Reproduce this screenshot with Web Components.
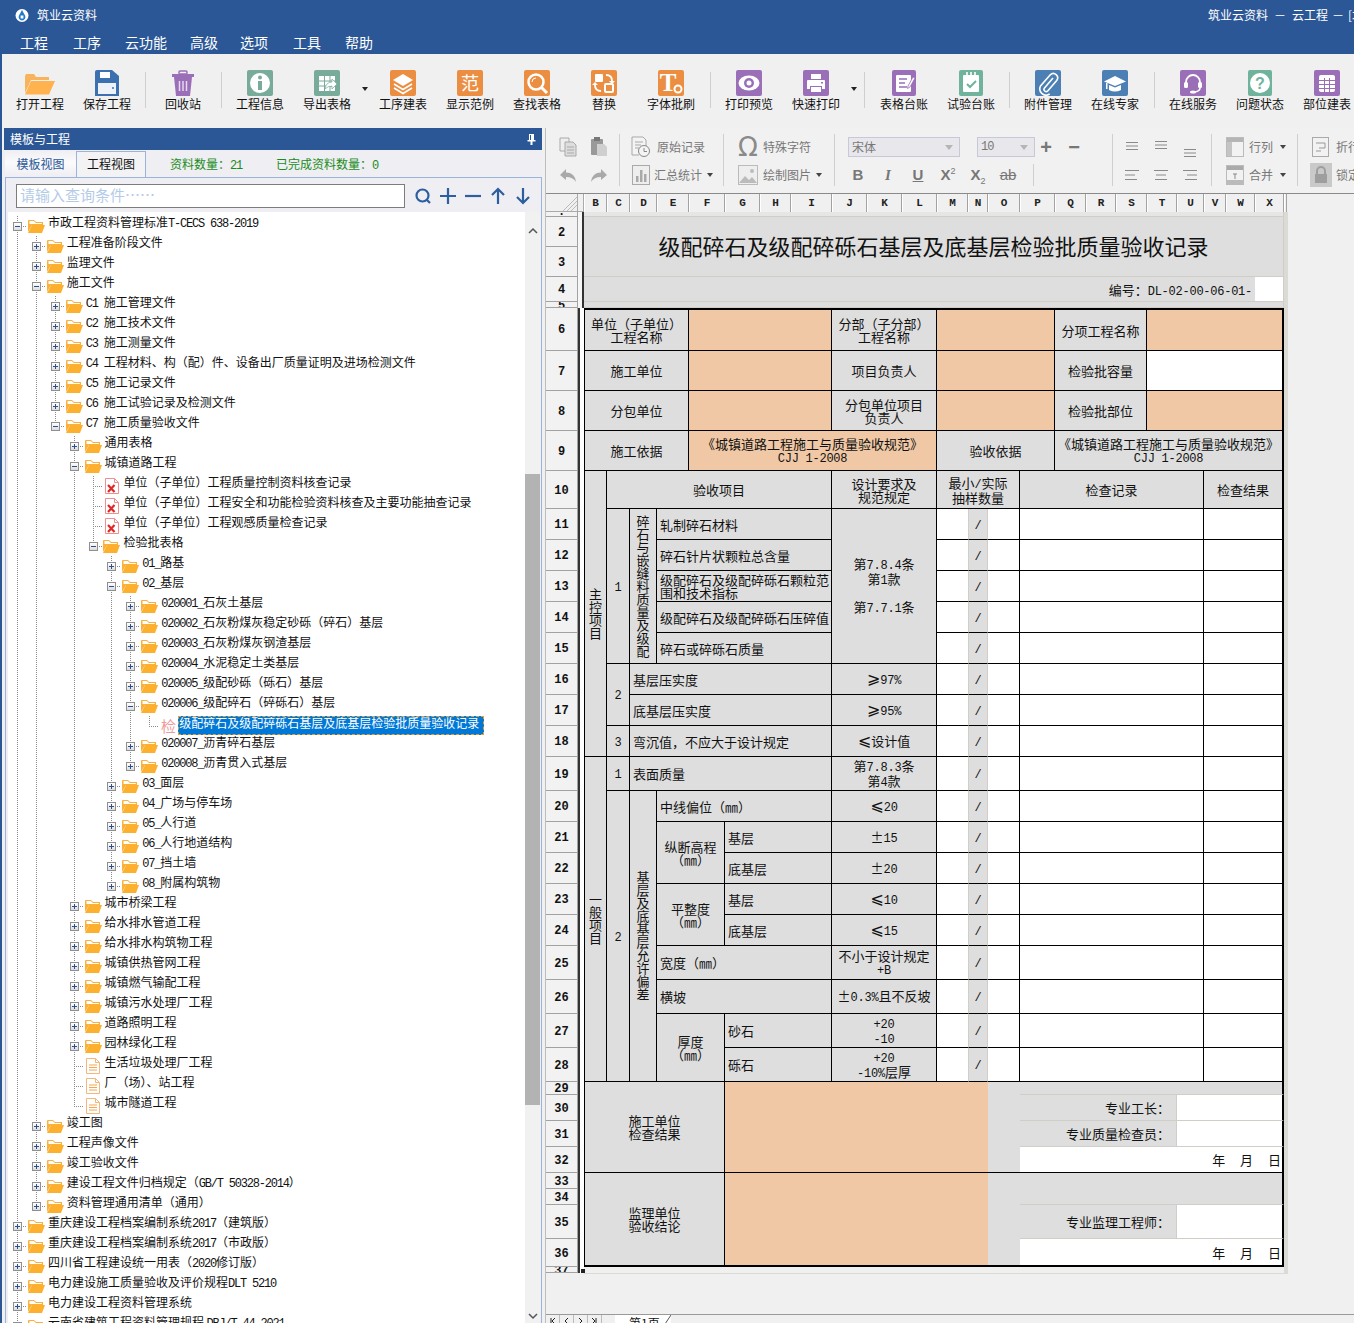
<!DOCTYPE html>
<html lang="zh-CN">
<head>
<meta charset="utf-8">
<title>筑业云资料</title>
<style>
  html, body { margin: 0; height: 1323px; overflow: hidden; }
  body {
    display: flex; flex-direction: column;
    font: 12px/1.2 "Noto Sans CJK SC", "Liberation Sans", sans-serif;
    background: #f0f0f0; color: #111;
  }
  .main { flex: 1; display: flex; min-height: 0; border-left: 2px solid #2b5797; }
</style>
</head>
<body>
<zy-titlebar></zy-titlebar>
<zy-ribbon>
  <zy-tool icon="open" label="打开工程"></zy-tool>
  <zy-tool icon="save" label="保存工程"></zy-tool>
  <zy-sep></zy-sep>
  <zy-tool icon="trash" label="回收站"></zy-tool>
  <zy-sep style="width:10px"></zy-sep>
  <zy-tool icon="info" label="工程信息"></zy-tool>
  <zy-tool icon="export" label="导出表格"></zy-tool>
  <zy-drop></zy-drop>
  <zy-tool icon="layers" label="工序建表"></zy-tool>
  <zy-tool icon="fan" label="显示范例"></zy-tool>
  <zy-tool icon="find" label="查找表格"></zy-tool>
  <zy-tool icon="swap" label="替换"></zy-tool>
  <zy-tool icon="brush" label="字体批刷"></zy-tool>
  <zy-sep style="width:11px"></zy-sep>
  <zy-tool icon="eye" label="打印预览"></zy-tool>
  <zy-tool icon="printer" label="快速打印"></zy-tool>
  <zy-drop></zy-drop>
  <zy-sep style="width:12px"></zy-sep>
  <zy-tool icon="ledger" label="表格台账"></zy-tool>
  <zy-tool icon="test" label="试验台账"></zy-tool>
  <zy-sep style="width:10px"></zy-sep>
  <zy-tool icon="clip" label="附件管理"></zy-tool>
  <zy-tool icon="cap" label="在线专家"></zy-tool>
  <zy-sep style="width:11px"></zy-sep>
  <zy-tool icon="headset" label="在线服务"></zy-tool>
  <zy-tool icon="help" label="问题状态"></zy-tool>
  <zy-tool icon="grid" label="部位建表"></zy-tool>
</zy-ribbon>
<div class="main">
  <tree-panel></tree-panel>
  <sheet-view></sheet-view>
</div>

<script>
// ascii runs get the narrow mono look of the original bitmap font
const fmt = s => s
  .replace(/[\x21-\x7e][\x20-\x7e]*/g, m => `<span class="a">${m}</span>`)
  .replace(/[⩾⩽]/g, m => `<span class="cmp">${m}</span>`)
  .replace(/\n/g, '<br>');

class ZyTitlebar extends HTMLElement {
  constructor() {
    super();
    this.attachShadow({ mode: 'open' });
    const menu = [['工程', 20], ['工序', 25], ['云功能', 24], ['高级', 23], ['选项', 22], ['工具', 25], ['帮助', 24]];
    this.shadowRoot.innerHTML = `
      <style>
        :host { display: block; height: 54px; background: #2b5797; color: #fff; }
        .top { height: 30px; display: flex; align-items: center; padding-left: 15px; }
        .top svg { margin-right: 8px; }
        .name { flex: 1; }
        .right { width: 146px; overflow: hidden; white-space: pre; }
        .menu { height: 24px; display: flex; align-items: center; font-size: 14px; }
      </style>
      <div class="top">
        <svg width="14" height="16" viewBox="0 0 14 16">
          <circle cx="7" cy="8.5" r="6.5" fill="#fff"/>
          <path d="M7 3 10 8.5A3.4 3.4 0 1 1 4 8.5Z" fill="#2478c8"/>
          <rect x="5.6" y="8.5" width="2.8" height="3" fill="#fff"/>
        </svg>
        <span class="name">筑业云资料</span>
        <span class="right">筑业云资料<span style="margin:0 6px">－</span>云工程<span style="margin:0 4px">－</span>[北京</span>
      </div>
      <div class="menu">${menu.map(([t, m]) => `<span style="margin-left:${m}px">${t}</span>`).join('')}</div>`;
  }
}
customElements.define('zy-titlebar', ZyTitlebar);

class ZyRibbon extends HTMLElement {
  constructor() {
    super();
    this.attachShadow({ mode: 'open' });
    this.shadowRoot.innerHTML = `
      <style>
        :host { display: flex; height: 74px; box-sizing: border-box; padding: 0 0 0 4.5px; background: #f0f0f0;
                border-left: 2px solid #2b5797; overflow: hidden; }
      </style>
      <slot></slot>`;
  }
}
customElements.define('zy-ribbon', ZyRibbon);

const tile = (c, inner, w = 26) => `<svg width="26" height="26" viewBox="0 0 26 26"><rect x="${(26 - w) / 2}" width="${w}" height="26" rx="2" fill="${c}"/>${inner}</svg>`;
const ORANGE = '#ec8e42', PURPLE = '#9b6fb8', GREEN = '#78ab9a', BLUE = '#4c80b5', TEAL = '#70b39d';

const ICONS = {
  open: `<svg width="32" height="22" viewBox="0 0 32 22" style="margin-top:3px;margin-bottom:1px">
    <path d="M1 20V3l1-2h8l2 3h13v3H7Z" fill="#f8b45c"/>
    <path d="M7 8h24l-6 13.500H1Z" fill="#ffb24d"/></svg>`,
  save: `<svg width="24" height="26" viewBox="0 0 24 26">
    <path d="M0 2a2 2 0 0 1 2-2h15l7 6v20H0Z" fill="#3c70ae"/>
    <rect x="5" y="2" width="10" height="6" fill="#fff"/>
    <rect x="3" y="13" width="18" height="11" fill="#eef2f8"/>
    <circle cx="18" cy="18" r="1" fill="#3c70ae"/></svg>`,
  trash: `<svg width="26" height="26" viewBox="0 0 26 26">
    <rect x="9" y="1" width="8" height="3" rx="1" fill="none" stroke="${PURPLE}" stroke-width="1.500"/>
    <rect x="2" y="4" width="22" height="3" fill="${PURPLE}"/>
    <path d="M4 7h18l-2 19H6Z" fill="${PURPLE}"/>
    <path d="M9.500 11v10M13 11v10M16.500 11v10" stroke="#e6d8ee" stroke-width="1.500"/></svg>`,
  info: tile(GREEN, `<circle cx="13" cy="13" r="10" fill="#fff"/><circle cx="13" cy="7.500" r="2" fill="${GREEN}"/><rect x="11" y="11" width="4" height="9" fill="${GREEN}"/>`),
  export: tile(GREEN, `<rect x="5" y="6" width="16" height="15" fill="#fff"/><path d="M5 11h16M5 16h16M10.500 6v15M16 6v15" stroke="${GREEN}"/><path d="M11 19q1-7 7-7V9l5 5-5 5v-3q-4 0-7 3Z" fill="#fff" stroke="${GREEN}" stroke-width=".7"/>`),
  layers: tile(ORANGE, `<path d="M13 4 23 10 13 16 3 10Z" fill="#fff"/><path d="M4 14l9 5.500 9-5.500M4 18l9 5.500 9-5.500" fill="none" stroke="#fff" stroke-width="1.600"/>`),
  fan: tile(ORANGE, `<text x="13" y="19.500" text-anchor="middle" font-size="18" fill="#fff" font-family="Noto Sans CJK SC">范</text>`),
  find: tile(ORANGE, `<circle cx="12" cy="12" r="7.500" fill="none" stroke="#fff" stroke-width="2.500"/><path d="M17.500 17.500 23 23" stroke="#fff" stroke-width="3"/><path d="M8 12a4 4 0 0 1 4-4" fill="none" stroke="#fff"/>`),
  swap: tile(ORANGE, `<rect x="4" y="4" width="8" height="8" rx="1" fill="#fff"/><rect x="14" y="14" width="8" height="8" rx="1" fill="none" stroke="#fff" stroke-width="2"/><path d="M15 5q6 0 6 6M4 15q0 6 6 6" fill="none" stroke="#fff" stroke-width="1.800"/><path d="M18 11h6l-3 3ZM1 15h6l-3-3Z" fill="#fff"/>`),
  brush: tile(ORANGE, `<text x="10" y="21" text-anchor="middle" font-size="25" font-weight="700" fill="#fff" font-family="Liberation Serif">T</text><circle cx="20" cy="19" r="3.500" fill="none" stroke="#fff" stroke-width="2"/>`),
  eye: tile(PURPLE, `<ellipse cx="13" cy="13" rx="10.500" ry="7.500" fill="#fff"/><circle cx="13" cy="13" r="5" fill="${PURPLE}"/><circle cx="13" cy="13" r="2.500" fill="#fff"/>`),
  printer: tile(PURPLE, `<rect x="8" y="4" width="10" height="5" fill="#fff"/><path d="M4 11a1 1 0 0 1 1-1h16a1 1 0 0 1 1 1v8h-3v-3H7v3H4Z" fill="#fff"/><rect x="8" y="17" width="10" height="5" fill="#fff"/><rect x="18" y="12" width="2" height="1.500" fill="${PURPLE}"/>`),
  ledger: tile(PURPLE, `<rect x="5" y="5" width="15" height="17" rx="1" fill="#fff"/><path d="M8 9h8M8 13h6M8 17h8" stroke="${PURPLE}" stroke-width="1.500"/><path d="M17 16l5-9 2 1-5 9-2.500 1.500Z" fill="#fff" stroke="${PURPLE}" stroke-width=".8"/>`, 24),
  test: tile(TEAL, `<rect x="5" y="5" width="16" height="17" rx="1" fill="#fff"/><path d="M9 2v6M13 2v6M17 2v6" stroke="#fff" stroke-width="1.600"/><path d="M9 14l3 3 6-6" fill="none" stroke="${TEAL}" stroke-width="2"/>`, 24),
  clip: tile(BLUE, `<path d="M18 8 9.500 18a2.200 2.200 0 0 0 3.200 3l9-10.500a4.300 4.300 0 0 0-6.400-5.700L5.500 16a6.300 6.300 0 0 0 9.200 8" fill="none" stroke="#fff" stroke-width="1.600"/>`),
  cap: tile(BLUE, `<path d="M13 6 24 11.500 13 16 2 11.500Z" fill="#fff"/><path d="M7 15v5q6 3 12 0v-5l-6 2.500Z" fill="#fff"/><rect x="4" y="13" width="1.500" height="6" fill="#fff"/>`),
  headset: tile(PURPLE, `<path d="M6 15v-3a7 7 0 0 1 14 0v3" fill="none" stroke="#fff" stroke-width="1.800"/><rect x="4" y="12" width="4" height="6" rx="1.500" fill="#fff"/><rect x="18" y="12" width="4" height="6" rx="1.500" fill="#fff"/><path d="M20 18q0 3-5 4" fill="none" stroke="#fff" stroke-width="1.500"/><ellipse cx="13" cy="22" rx="3" ry="1.500" fill="#fff"/>`),
  help: tile(TEAL, `<circle cx="13" cy="13" r="10" fill="#fff"/><text x="13" y="18.500" text-anchor="middle" font-size="16" font-weight="700" fill="${TEAL}" font-family="Liberation Sans">?</text>`, 24),
  grid: tile(PURPLE, `<rect x="5" y="5" width="16" height="17" rx="2" fill="#fff"/><path d="M5 10.500h16M5 14.500h16M5 18.500h16M10.500 8v14M15.500 8v14" stroke="${PURPLE}"/>`),
};

class ZyTool extends HTMLElement {
  constructor() {
    super();
    this.attachShadow({ mode: 'open' });
    this.shadowRoot.innerHTML = `
      <style>
        :host { display: flex; flex-direction: column; align-items: center; width: 67px; flex: none; padding-top: 16px; color: #111; }
        .i { height: 26px; }
        .t { line-height: 16px; white-space: nowrap; }
      </style>
      <div class="i">${ICONS[this.getAttribute('icon')] || ''}</div>
      <div class="t">${this.getAttribute('label')}</div>`;
  }
}
customElements.define('zy-tool', ZyTool);

class ZySep extends HTMLElement {
  constructor() {
    super();
    this.attachShadow({ mode: 'open' });
    this.shadowRoot.innerHTML = `
      <style>
        :host { display: flex; justify-content: center; width: 9px; flex: none; padding-top: 18px; box-sizing: border-box; height: 54px; }
        i { display: block; width: 1px; height: 36px; background: #cfcfcf; }
      </style><i></i>`;
  }
}
customElements.define('zy-sep', ZySep);

class ZyDrop extends HTMLElement {
  constructor() {
    super();
    this.attachShadow({ mode: 'open' });
    this.shadowRoot.innerHTML = `
      <style>
        :host { display: block; width: 9px; flex: none; padding-top: 33px; }
        i { display: block; margin-left: 1px; width: 0; height: 0; border: 3px solid transparent; border-top: 4px solid #222; border-bottom: 0; }
      </style><i></i>`;
  }
}
customElements.define('zy-drop', ZyDrop);

// level, text, kind (f folder, d doc, p pdf, k check form), open flag
const TREE = [
  [0, '市政工程资料管理标准T-CECS 638-2019', 'f', 1],
  [1, '工程准备阶段文件', 'f'], [1, '监理文件', 'f'], [1, '施工文件', 'f', 1],
  [2, 'C1 施工管理文件', 'f'], [2, 'C2 施工技术文件', 'f'], [2, 'C3 施工测量文件', 'f'],
  [2, 'C4 工程材料、构（配）件、设备出厂质量证明及进场检测文件', 'f'],
  [2, 'C5 施工记录文件', 'f'], [2, 'C6 施工试验记录及检测文件', 'f'], [2, 'C7 施工质量验收文件', 'f', 1],
  [3, '通用表格', 'f'], [3, '城镇道路工程', 'f', 1],
  [4, '单位（子单位）工程质量控制资料核查记录', 'p'],
  [4, '单位（子单位）工程安全和功能检验资料核查及主要功能抽查记录', 'p'],
  [4, '单位（子单位）工程观感质量检查记录', 'p'],
  [4, '检验批表格', 'f', 1],
  [5, '01_路基', 'f'], [5, '02_基层', 'f', 1],
  [6, '020001_石灰土基层', 'f'], [6, '020002_石灰粉煤灰稳定砂砾（碎石）基层', 'f'],
  [6, '020003_石灰粉煤灰钢渣基层', 'f'], [6, '020004_水泥稳定土类基层', 'f'],
  [6, '020005_级配砂砾（砾石）基层', 'f'], [6, '020006_级配碎石（碎砾石）基层', 'f', 1],
  [7, '级配碎石及级配碎砾石基层及底基层检验批质量验收记录', 'k'],
  [6, '020007_沥青碎石基层', 'f'], [6, '020008_沥青贯入式基层', 'f'],
  [5, '03_面层', 'f'], [5, '04_广场与停车场', 'f'], [5, '05_人行道', 'f'],
  [5, '06_人行地道结构', 'f'], [5, '07_挡土墙', 'f'], [5, '08_附属构筑物', 'f'],
  [3, '城市桥梁工程', 'f'], [3, '给水排水管道工程', 'f'], [3, '给水排水构筑物工程', 'f'],
  [3, '城镇供热管网工程', 'f'], [3, '城镇燃气输配工程', 'f'], [3, '城镇污水处理厂工程', 'f'],
  [3, '道路照明工程', 'f'], [3, '园林绿化工程', 'f'],
  [3, '生活垃圾处理厂工程', 'd'], [3, '厂（场）、站工程', 'd'], [3, '城市隧道工程', 'd'],
  [1, '竣工图', 'f'], [1, '工程声像文件', 'f'], [1, '竣工验收文件', 'f'],
  [1, '建设工程文件归档规定（GB/T 50328-2014）', 'f'], [1, '资料管理通用清单（通用）', 'f'],
  [0, '重庆建设工程档案编制系统2017（建筑版）', 'f'], [0, '重庆建设工程档案编制系统2017（市政版）', 'f'],
  [0, '四川省工程建设统一用表（2020修订版）', 'f'], [0, '电力建设施工质量验收及评价规程DLT 5210', 'f'],
  [0, '电力建设工程资料管理系统', 'f'], [0, '云南省建筑工程资料管理规程 DBJ/T-44-2021', 'f'],
];

const FOLDER = `<svg width="17" height="14" viewBox="0 0 17 14">
  <path d="M0 13V1.500L1 1h5l2 2h7v3H4Z" fill="#fbb03b"/>
  <path d="M1.500 5V2h4.300l2 2h6v1Z" fill="#fff"/>
  <path d="M4 6h13l-3 8H0Z" fill="#fdaf2e"/></svg>`;
const PDF = `<svg width="14" height="16" viewBox="0 0 14 16">
  <path d="M.5.500h9l4 4v11H.5Z" fill="#fff" stroke="#ef8f8f"/>
  <path d="M9.500.500v4h4" fill="none" stroke="#ef8f8f"/>
  <path d="M3 7 9.500 14M9.500 7 3 14" stroke="#e02828" stroke-width="2.200"/></svg>`;
const DOC = `<svg width="14" height="16" viewBox="0 0 14 16">
  <path d="M.5.500h9l4 4v11H.5Z" fill="#fff" stroke="#f4b67a"/>
  <path d="M9.500.500v4h4" fill="none" stroke="#f4b67a"/>
  <path d="M3 7h8M3 9.500h8M3 12h8" stroke="#f5a450"/></svg>`;

class TreePanel extends HTMLElement {
  constructor() {
    super();
    this.attachShadow({ mode: 'open' });
    this.shadowRoot.innerHTML = `
      <style>
        :host { display: flex; flex-direction: column; width: 538px; flex: none; margin-left: 2px; background: #eeeef3; overflow: hidden; }
        .a { font: 12px/1 "Liberation Mono", monospace; letter-spacing: -1.2px; }
        .head { height: 22px; flex: none; background: #2b5797; color: #fff; display: flex; align-items: center; justify-content: space-between; padding: 0 6px 0 6px; }
        .tabs { height: 26px; flex: none; margin: 1px 0 0 1px; display: flex; align-items: center; }
        .tab { box-sizing: border-box; height: 26px; width: 71px; display: flex; align-items: center; justify-content: center; }
        .tab.on { color: #2b5797; background: linear-gradient(#f0f0f4, #fbfbfd 45%, #eeeef3); }
        .tab.off { border: 1px solid #9ab4dc; border-bottom: 0; width: 70px; background: #f3f3f6; }
        .count { color: #1a8c1a; margin-left: 24px; }
        .count .a { color: #1a8c1a; }
        .body { flex: 1; min-height: 0; margin-left: 1px; border: 1px solid #9ab4dc; border-bottom: 0; display: flex; flex-direction: column; padding-left: 2px; }
        .search { height: 24px; flex: none; margin: 6px 0 4px 8px; display: flex; align-items: center; }
        .input { box-sizing: border-box; width: 389px; height: 24px; margin-right: 5px; background: #fff; border: 1px solid #7c7c7c;
                 color: #b4cbe8; font-size: 15px; line-height: 20px; padding-left: 3px; white-space: nowrap; }
        .sbtn { width: 25px; display: flex; justify-content: center; }
        .wrap { flex: 1; min-height: 0; display: flex; }
        .tree { flex: 1; min-width: 0; background: #fff; padding-top: 4px; overflow: hidden; }
        .row { display: flex; height: 20px; align-items: center; white-space: pre; color: #111; }
        .g { width: 18.9px; height: 20px; flex: none; background: no-repeat; }
        .ic { width: 17px; height: 20px; flex: none; margin: 0 3px 0 1px; display: flex; align-items: center; justify-content: center; }
        .ex { width: 9px; height: 9px; margin: 5.500px 0 0 5px; box-sizing: border-box; border: 1px solid #8f8f8f; background: linear-gradient(#fff, #dcdcdc); display: flex; align-items: center; justify-content: center; }
        .ex svg { display: block; }
        .tx { align-self: flex-start; line-height: 12px; height: 20px; }
        .sel .tx { height: 19px; line-height: 13px; margin-left: -2px; padding: 0 2px 0 1px; background: #0078d7; color: #fff; outline: 1px dashed #e8a030; outline-offset: -1px; width: 306px; box-sizing: border-box; }
        .k { color: #f29a9a; font-size: 15px; }
        .scroll { width: 15px; margin-right: 1px; flex: none; background: #f1f1f1; display: flex; flex-direction: column; }
        .scroll .sp1 { height: 262px; flex: none; padding-top: 10px; box-sizing: border-box; text-align: center; }
        .thumb { height: 631px; flex: none; background: #b3b3b3; }
        .scroll .sp2 { flex: 1; display: flex; flex-direction: column; justify-content: flex-end; align-items: center; padding-bottom: 3px; }
      </style>
      <div class="head"><span>模板与工程</span>
        <svg width="9" height="11" viewBox="0 0 9 11"><path d="M2 0h5v6h1.500v1.500h-3V11h-2V7.500h-3V6H2Z" fill="#fff"/><rect x="3" y="1" width="1" height="5" fill="#2b5797"/></svg>
      </div>
      <div class="tabs">
        <div class="tab on">模板视图</div><div class="tab off">工程视图</div>
        <span class="count">资料数量：${fmt('21')}</span><span class="count" style="margin-left:34px">已完成资料数量：${fmt('0')}</span>
      </div>
      <div class="body">
        <div class="search">
          <div class="input">请输入查询条件……</div>
          <span class="sbtn"><svg width="18" height="18" viewBox="0 0 18 18"><circle cx="8.500" cy="8.500" r="6" fill="none" stroke="#2d5f9f" stroke-width="2.200"/><path d="M12.500 12.500 16 16" stroke="#2d5f9f" stroke-width="2.200"/></svg></span>
          <span class="sbtn"><svg width="18" height="18" viewBox="0 0 18 18"><path d="M1 9h16M9 1v16" stroke="#2d5f9f" stroke-width="2.200"/></svg></span>
          <span class="sbtn"><svg width="18" height="18" viewBox="0 0 18 18"><path d="M1 9h16" stroke="#2d5f9f" stroke-width="2.200"/></svg></span>
          <span class="sbtn"><svg width="18" height="18" viewBox="0 0 18 18"><path d="M9 17V2M3 8l6-6 6 6" fill="none" stroke="#2d5f9f" stroke-width="2.200"/></svg></span>
          <span class="sbtn"><svg width="18" height="18" viewBox="0 0 18 18"><path d="M9 1v15M3 10l6 6 6-6" fill="none" stroke="#2d5f9f" stroke-width="2.200"/></svg></span>
        </div>
        <div class="wrap">
          <div class="tree">${this.rows()}</div>
          <div class="scroll">
            <div class="sp1"><svg width="10" height="7" viewBox="0 0 10 7"><path d="M1 6l4-4 4 4" fill="none" stroke="#555" stroke-width="1.500"/></svg></div>
            <div class="thumb"></div>
            <div class="sp2"><svg width="10" height="7" viewBox="0 0 10 7"><path d="M1 1l4 4 4-4" fill="none" stroke="#555" stroke-width="1.500"/></svg></div>
          </div>
        </div>
      </div>`;
  }

  rows() {
    // dotted guides are backgrounds of the indent cells
    const dot = 'repeating-linear-gradient(#8a8a8a 0 1px,transparent 1px 2px)';
    const dotH = 'repeating-linear-gradient(90deg,#8a8a8a 0 1px,transparent 1px 2px)';
    const hasNext = (i, lvl) => {
      for (let j = i + 1; j < TREE.length; j++) {
        if (TREE[j][0] === lvl) return true;
        if (TREE[j][0] < lvl) return false;
      }
      return false;
    };
    return TREE.map(([lvl, text, kind, open], i) => {
      let g = '';
      for (let k = 0; k < lvl; k++) {
        const on = hasNext(i, k);
        g += `<span class="g" ${on ? `style="background-image:${dot};background-size:1px 100%;background-position:9px 0"` : ''}></span>`;
      }
      const down = hasNext(i, lvl);
      const leaf = kind !== 'f';
      const sign = open
        ? '<svg width="7" height="7" viewBox="0 0 7 7"><path d="M1 3.500h5" stroke="#2b4f8f"/></svg>'
        : '<svg width="7" height="7" viewBox="0 0 7 7"><path d="M1 3.500h5M3.500 1v5" stroke="#2b4f8f"/></svg>';
      const cell = `<span class="g" style="background-image:${dot},${dotH};background-size:1px ${down ? '100%' : '50%'},10px 1px;background-position:9px 0,9px 10px">${leaf ? '' : `<span class="ex">${sign}</span>`}</span>`;
      const icon = kind === 'f' ? FOLDER : kind === 'p' ? PDF : kind === 'd' ? DOC : '<span class="k">检</span>';
      return `<div class="row ${kind === 'k' ? 'sel' : ''}">${g}${cell}<span class="ic">${icon}</span><span class="tx">${fmt(text)}</span></div>`;
    }).join('');
  }
}
customElements.define('tree-panel', TreePanel);

const gray = '#a9a9a9';
const line3 = (a, b, c) => `<svg width="16" height="12" viewBox="0 0 16 12"><path d="M${a} 1.500h${16 - 2 * a}M${b} 6h${16 - 2 * b}M${c} 10.500h${16 - 2 * c}" stroke="#8a8a8a"/></svg>`;
const alignR = `<svg width="16" height="12" viewBox="0 0 16 12"><path d="M1 1.500h14M5 6h10M3 10.500h12" stroke="#8a8a8a"/></svg>`;
const alignL = `<svg width="16" height="12" viewBox="0 0 16 12"><path d="M1 1.500h14M1 6h10M1 10.500h12" stroke="#8a8a8a"/></svg>`;
const valign = `<svg width="14" height="10" viewBox="0 0 14 10"><path d="M1 1.500h12M1 5h12M1 8.500h12" stroke="#8a8a8a"/></svg>`;
const drop = `<svg width="7" height="4" viewBox="0 0 7 4"><path d="M0 0h6L3 4Z" fill="#444"/></svg>`;

class SheetToolbar extends HTMLElement {
  constructor() {
    super();
    this.attachShadow({ mode: 'open' });
    this.shadowRoot.innerHTML = `
      <style>
        :host { display: flex; height: 65px; flex: none; background: #f1f1f1; color: #777; overflow: hidden; }
        .a { font: 12px/1 "Liberation Mono", monospace; letter-spacing: -1px; }
        .g { box-sizing: border-box; height: 52px; margin-top: 6px; border-right: 1px solid #cfcfcf; flex: none; }
        .two { display: grid; grid-template-rows: 28px 28px; margin-top: -1px; height: 56px; }
        .r { display: flex; align-items: center; white-space: nowrap; }
        .c { width: 31px; display: flex; justify-content: center; }
        .ic { width: 22px; display: flex; justify-content: center; margin-right: 4px; flex: none; }
        .sel { box-sizing: border-box; height: 20px; border: 1px solid #c8c8d8; background: #e7e7ec; display: flex; align-items: center; justify-content: space-between; padding: 0 6px 0 3px; }
        .b { width: 30px; text-align: center; font: 700 15px/18px "Liberation Sans", sans-serif; color: #777; }
        .b sup, .b sub { font-size: 9px; font-weight: 400; line-height: 0; }
        .pm { color: #777; font: 700 20px "Liberation Sans", sans-serif; width: 28px; text-align: center; line-height: 20px; }
        .v { width: 29px; display: flex; justify-content: center; }
      </style>
      <div class="g" style="width:74px;padding-left:6px">
        <div class="two">
          <div class="r">
            <span class="c"><svg width="18" height="20" viewBox="0 0 18 20"><path d="M1 1h9v13H1Z" fill="#eee" stroke="${gray}"/><path d="M6 5h8l3 3v11H6Z" fill="#ddd" stroke="${gray}"/><path d="M8 10h7M8 13h7M8 16h7" stroke="${gray}"/></svg></span>
            <span class="c"><svg width="18" height="20" viewBox="0 0 18 20"><rect x="1" y="2" width="12" height="16" rx="1" fill="#999"/><rect x="4" y="0" width="6" height="4" fill="#777"/><path d="M7 7h7l3 3v9H7Z" fill="#cfcfcf"/></svg></span>
          </div>
          <div class="r">
            <span class="c"><svg width="18" height="14" viewBox="0 0 18 14"><path d="M1 7l6-6v3.500q9 0 10 9.500-3-5-10-5V12Z" fill="${gray}"/></svg></span>
            <span class="c"><svg width="18" height="14" viewBox="0 0 18 14"><path d="M17 7l-6-6v3.500q-9 0-10 9.500 3-5 10-5V12Z" fill="${gray}"/></svg></span>
          </div>
        </div>
      </div>
      <div class="g" style="width:104px;padding-left:10px">
        <div class="two">
          <div class="r"><span class="ic" style="margin-right:5px"><svg width="20" height="22" viewBox="0 0 20 22"><path d="M1 1h11l3 3v8M1 1v18h7" fill="#f4f4f4" stroke="${gray}"/><path d="M4 6h8M4 9h6M4 12h4" stroke="${gray}"/><circle cx="13" cy="15" r="5.500" fill="#f4f4f4" stroke="#888"/><path d="M13 12v3.500h3" fill="none" stroke="#888"/></svg></span>原始记录</div>
          <div class="r"><span class="ic" style="margin-right:2px"><svg width="18" height="20" viewBox="0 0 18 20"><rect x=".5" y=".5" width="17" height="19" fill="#eee" stroke="${gray}"/><path d="M4 17v-6h2.500v6ZM8 17V5h2.500v12ZM12 17V9h2.500v8Z" fill="${gray}"/></svg></span>汇总统计<span style="margin-left:5px;display:flex">${drop}</span></div>
        </div>
      </div>
      <div class="g" style="width:111px;padding-left:13px">
        <div class="two">
          <div class="r"><span class="ic" style="font:26px 'DejaVu Sans',sans-serif;color:#8a8a8a">Ω</span>特殊字符</div>
          <div class="r"><span class="ic"><svg width="20" height="20" viewBox="0 0 20 20"><rect x=".5" y=".5" width="19" height="19" fill="#eee" stroke="#bbb"/><path d="M1 18l6-7 4 4 3-3 5 6Z" fill="#bbb"/><circle cx="14" cy="6" r="2" fill="#bbb"/></svg></span>绘制图片<span style="margin-left:5px;display:flex">${drop}</span></div>
        </div>
      </div>
      <div class="g" style="width:278px;padding-left:13px">
        <div class="two">
          <div class="r">
            <div class="sel" style="width:112px">宋体<svg width="8" height="5" viewBox="0 0 8 5"><path d="M0 0h8L4 5Z" fill="#b5b5b5"/></svg></div>
            <div class="sel" style="width:58px;margin-left:17px"><span class="a">10</span><svg width="8" height="5" viewBox="0 0 8 5"><path d="M0 0h8L4 5Z" fill="#b5b5b5"/></svg></div>
            <span class="pm" style="margin-left:-3px">+</span><span class="pm">−</span>
          </div>
          <div class="r" style="margin-left:-5px">
            <span class="b">B</span><span class="b" style="font-style:italic;font-family:'Liberation Serif'">I</span><span class="b" style="text-decoration:underline">U</span><span class="b">X<sup>2</sup></span><span class="b">X<sub>2</sub></span><span class="b" style="text-decoration:line-through;font-weight:400">ab</span>
            <span style="width:1px;height:22px;background:#cfcfcf;margin-left:10px"></span>
          </div>
        </div>
      </div>
      <div class="g" style="width:99px;padding-left:4.5px">
        <div class="two">
          <div class="r">
            <span class="v" style="align-self:flex-start;margin-top:8px">${valign}</span>
            <span class="v" style="margin-top:-4px">${valign}</span>
            <span class="v" style="align-self:flex-end;margin-bottom:3px">${valign}</span>
          </div>
          <div class="r"><span class="v">${alignL}</span><span class="v">${line3(1, 3, 2)}</span><span class="v">${alignR}</span></div>
        </div>
      </div>
      <div class="g" style="width:86px;padding-left:12px">
        <div class="two">
          <div class="r"><span class="ic" style="margin-right:3px"><svg width="18" height="20" viewBox="0 0 18 20"><rect x=".5" y=".5" width="17" height="19" fill="#f2f2f2" stroke="#bbb"/><rect x="1" y="1" width="5" height="18" fill="#c4c4c4"/><rect x="1" y="1" width="16" height="4" fill="#b5b5b5"/></svg></span>行列<span style="margin-left:7px;display:flex">${drop}</span></div>
          <div class="r"><span class="ic" style="margin-right:3px"><svg width="18" height="20" viewBox="0 0 18 20"><rect x=".5" y=".5" width="17" height="19" fill="#f2f2f2" stroke="#bbb"/><rect x="1" y="1" width="16" height="4" fill="#aaa"/><rect x="1" y="15" width="16" height="4" fill="#bbb"/><path d="M7 9h4M9 9v5" stroke="#888"/></svg></span>合并<span style="margin-left:7px;display:flex">${drop}</span></div>
        </div>
      </div>
      <div style="padding-left:12px;margin-top:6px;flex:none">
        <div class="two">
          <div class="r"><span class="ic"><svg width="18" height="20" viewBox="0 0 18 20"><rect x=".5" y=".5" width="16" height="19" fill="#f2f2f2" stroke="#aaa"/><path d="M4 6h9v5H7M4 14h5" fill="none" stroke="#999"/></svg></span>折行</div>
          <div class="r"><span class="ic"><svg width="22" height="24" viewBox="0 0 22 24"><rect width="22" height="24" fill="#c9c9c9"/><path d="M7 11V8a4 4 0 0 1 8 0v3" fill="none" stroke="#9e9e9e" stroke-width="2"/><rect x="5" y="11" width="12" height="9" fill="#9e9e9e"/></svg></span>锁定</div>
        </div>
      </div>`;
  }
}
customElements.define('sheet-toolbar', SheetToolbar);

const COLS = 'BCDEFGHIJKLMNOPQRSTUVWX';
const COL_W = [23, 23, 27, 32, 36, 35, 31, 41, 35, 35, 35, 31, 20, 32, 35, 31, 30, 31, 30, 27, 22, 29, 29];
const ROW_H = [5, 30, 30, 25, 6, 43, 40, 40, 40, 38, 31, 31, 31, 31, 31, 31, 31, 31, 34, 31, 31, 31, 31, 31, 34, 34, 34, 34, 13, 26, 26, 26, 16, 16, 34, 28, 6];
const GB = '《城镇道路工程施工与质量验收规范》\nCJJ 1-2008';

function sheetCells() {
  const c = [
    ['B', 'X', 1, 1, '', 'soft top'],
    ['B', 'X', 2, 3, '级配碎石及级配碎砾石基层及底基层检验批质量验收记录', 'soft title'],
    ['B', 'W', 4, 4, '编号：DL-02-00-06-01-', 'soft r'], ['X', 'X', 4, 4, '', 'soft w'],
    ['B', 'X', 5, 5, '', 'soft'],
    ['B', 'E', 6, 6, '单位（子单位）\n工程名称'], ['F', 'I', 6, 6, '', 'o'], ['J', 'L', 6, 6, '分部（子分部）\n工程名称'], ['M', 'P', 6, 6, '', 'o'], ['Q', 'S', 6, 6, '分项工程名称'], ['T', 'X', 6, 6, '', 'o'],
    ['B', 'E', 7, 7, '施工单位'], ['F', 'I', 7, 7, '', 'o'], ['J', 'L', 7, 7, '项目负责人'], ['M', 'P', 7, 7, '', 'o'], ['Q', 'S', 7, 7, '检验批容量'], ['T', 'X', 7, 7, '', 'w'],
    ['B', 'E', 8, 8, '分包单位'], ['F', 'I', 8, 8, '', 'o'], ['J', 'L', 8, 8, '分包单位项目\n负责人'], ['M', 'P', 8, 8, '', 'o'], ['Q', 'S', 8, 8, '检验批部位'], ['T', 'X', 8, 8, '', 'o'],
    ['B', 'E', 9, 9, '施工依据'], ['F', 'L', 9, 9, GB, 'o'], ['M', 'P', 9, 9, '验收依据'], ['Q', 'X', 9, 9, GB],
    ['B', 'B', 10, 18, '主控项目', 'v'],
    ['C', 'I', 10, 10, '验收项目'], ['J', 'L', 10, 10, '设计要求及\n规范规定'], ['M', 'O', 10, 10, '最小/实际\n抽样数量'], ['P', 'U', 10, 10, '检查记录'], ['V', 'X', 10, 10, '检查结果'],
    ['C', 'C', 11, 15, '1'], ['D', 'D', 11, 15, '碎石与嵌缝料质量及级配', 'v'],
    ['E', 'I', 11, 11, '轧制碎石材料', 'l'], ['E', 'I', 12, 12, '碎石针片状颗粒总含量', 'l'], ['E', 'I', 13, 13, '级配碎石及级配碎砾石颗粒范\n围和技术指标', 'l'],
    ['E', 'I', 14, 14, '级配碎石及级配碎砾石压碎值', 'l'], ['E', 'I', 15, 15, '碎石或碎砾石质量', 'l'],
    ['J', 'L', 11, 15, '第7.8.4条\n第1款\n\n第7.7.1条'],
    ['C', 'C', 16, 17, '2'], ['D', 'I', 16, 16, '基层压实度', 'l'], ['D', 'I', 17, 17, '底基层压实度', 'l'], ['J', 'L', 16, 16, '⩾97%'], ['J', 'L', 17, 17, '⩾95%'],
    ['C', 'C', 18, 18, '3'], ['D', 'I', 18, 18, '弯沉值，不应大于设计规定', 'l'], ['J', 'L', 18, 18, '⩽设计值'],
    ['B', 'B', 19, 28, '一般项目', 'v'],
    ['C', 'C', 19, 19, '1'], ['D', 'I', 19, 19, '表面质量', 'l'], ['J', 'L', 19, 19, '第7.8.3条\n第4款'],
    ['C', 'C', 20, 28, '2'], ['D', 'D', 20, 28, '基层及底基层允许偏差', 'v'],
    ['E', 'I', 20, 20, '中线偏位（㎜）', 'l'], ['J', 'L', 20, 20, '⩽20'],
    ['E', 'F', 21, 22, '纵断高程\n（㎜）'], ['G', 'I', 21, 21, '基层', 'l'], ['J', 'L', 21, 21, '±15'], ['G', 'I', 22, 22, '底基层', 'l'], ['J', 'L', 22, 22, '±20'],
    ['E', 'F', 23, 24, '平整度\n（㎜）'], ['G', 'I', 23, 23, '基层', 'l'], ['J', 'L', 23, 23, '⩽10'], ['G', 'I', 24, 24, '底基层', 'l'], ['J', 'L', 24, 24, '⩽15'],
    ['E', 'I', 25, 25, '宽度（㎜）', 'l'], ['J', 'L', 25, 25, '不小于设计规定\n+B'],
    ['E', 'I', 26, 26, '横坡', 'l'], ['J', 'L', 26, 26, '±0.3%且不反坡'],
    ['E', 'F', 27, 28, '厚度\n（㎜）'], ['G', 'I', 27, 27, '砂石', 'l'], ['J', 'L', 27, 27, '+20\n-10'], ['G', 'I', 28, 28, '砾石', 'l'], ['J', 'L', 28, 28, '+20\n-10%层厚'],
    ['B', 'F', 29, 32, '施工单位\n检查结果'], ['G', 'N', 29, 32, '', 'o nr'], ['O', 'O', 29, 32, '', 'nr'],
    ['P', 'X', 29, 29, '', 'soft'], ['P', 'T', 30, 30, '专业工长：', 'soft rr'], ['U', 'X', 30, 30, '', 'soft w'],
    ['P', 'T', 31, 31, '专业质量检查员：', 'soft rr'], ['U', 'X', 31, 31, '', 'soft w'], ['P', 'X', 32, 32, '年 月 日', 'w ymd'],
    ['B', 'F', 33, 36, '监理单位\n验收结论'], ['G', 'N', 33, 36, '', 'o nr'], ['O', 'O', 33, 36, '', 'nr'],
    ['P', 'X', 33, 34, '', 'soft'], ['P', 'T', 35, 35, '专业监理工程师：', 'soft rr'], ['U', 'X', 35, 35, '', 'soft w'], ['P', 'X', 36, 36, '年 月 日', 'w ymd'],
  ];
  // sampling columns repeat on every item row
  for (let r = 11; r <= 28; r++) {
    c.push(['M', 'M', r, r, '', 'w nr'], ['N', 'N', r, r, '/', 'slash'], ['O', 'O', r, r, '', 'w'], ['P', 'U', r, r, '', 'w'], ['V', 'X', r, r, '', 'w']);
  }
  return c;
}

class SheetView extends HTMLElement {
  constructor() {
    super();
    this.attachShadow({ mode: 'open' });
    const colT = COL_W.map(w => w + 'px').join(' ');
    const rowT = ROW_H.map(h => h + 'px').join(' ');
    const cells = sheetCells().map(([c1, c2, r1, r2, t, cls = '']) => {
      let s = `grid-column:${COLS.indexOf(c1) + 1}/${COLS.indexOf(c2) + 2};grid-row:${r1}/${r2 + 1};`;
      if (r1 >= 6) {
        if (c2 === 'X') s += 'border-right:2px solid #000;';
        if (c1 === 'B') s += 'border-left:1px solid #000;';
        if (r1 === 6) s += 'border-top:2px solid #000;';
        if (r2 === 36) s += 'border-bottom:2px solid #000;';
      }
      const inner = cls.split(' ').includes('v') ? `<span class="vt">${t}</span>` : `<span>${fmt(t)}</span>`;
      return `<div class="c ${cls}" style="${s}">${inner}</div>`;
    }).join('');
    this.shadowRoot.innerHTML = `
      <style>
        :host { flex: 1; min-width: 0; display: flex; flex-direction: column; margin-left: 3px; border-left: 1px solid #bdbdbd; background: #f0f0f0; overflow: hidden; }
        .a { font: 12px/1 "Liberation Mono", monospace; letter-spacing: -.25px; }
        .cmp { font: 16px/1 "DejaVu Sans", sans-serif; }
        .heads { display: flex; height: 19px; flex: none; box-sizing: border-box; border-top: 1px solid #8a8a8a; }
        .corner { width: 32px; box-sizing: border-box; border-right: 1px solid #aaa; border-bottom: 1px solid #aaa; flex: none;
                  background: linear-gradient(135deg, transparent 70%, #bbb 70% 72%, transparent 72% 78%, #bbb 78% 80%, transparent 80% 86%, #bbb 86% 88%, transparent 88%); }
        .corner2 { width: 6px; flex: none; box-sizing: border-box; border-right: 1px solid #aaa; border-bottom: 1px solid #aaa; }
        .cols { display: grid; grid-template-columns: ${colT} 3px; }
        .ch { box-sizing: border-box; border-right: 1px solid #a2a2a2; border-bottom: 1px solid #a2a2a2; border-left: 1px solid #fff; text-align: center;
              font: 700 11px/18px "Liberation Mono", monospace; color: #222; }
        .area { flex: 1; min-height: 0; display: flex; align-items: flex-start; }
        .rows { width: 32px; flex: none; display: grid; grid-template-rows: ${rowT}; }
        .rh { box-sizing: border-box; border-bottom: 1px solid #a2a2a2; border-right: 1px solid #a2a2a2; background: #f2f2f2; overflow: hidden; display: flex; align-items: center; justify-content: center; padding-top: 2px;
              font: 700 12px/12px "Liberation Mono", monospace; color: #111; }
        .gut { width: 6px; flex: none; height: 1061px; display: flex; flex-direction: column; }
        .gut1 { height: 96px; flex: none; box-sizing: border-box; border-right: 2px solid #333; background: #f6f6f6; }
        .gut2 { flex: 1; box-sizing: border-box; border-left: 2px solid #333; background: #fff; display: flex; flex-direction: column; justify-content: flex-end; }
        .gut2 i { display: block; width: 4px; height: 4px; background: #222; margin: 0 0 0 1px; }
        .grid { display: grid; grid-template-columns: ${colT}; grid-template-rows: ${rowT}; box-sizing: content-box; border-right: 4px solid #dcdad4; border-bottom: 1px solid #dcdad4; font-size: 13px; line-height: 13px; color: #111; }
        .c { box-sizing: border-box; min-width: 0; min-height: 0; overflow: hidden; background: #dedede; border-right: 1px solid #000; border-bottom: 1px solid #000;
             display: flex; align-items: center; justify-content: center; text-align: center; white-space: nowrap; }
        .soft { border-color: #cfcec7; }
        .top { background: #e6e6e6; }
        .o { background: #f0c8a5; }
        .w { background: #fff; }
        .nr { border-right: 0; }
        .l { justify-content: flex-start; text-align: left; padding-left: 3px; }
        .r, .rr { justify-content: flex-end; }
        .rr { padding-right: 6px; border-right: 1px solid #cfcec7; }
        .r { padding-right: 3px; padding-top: 2px; border-right: 0; }
        .title { font-size: 22px; line-height: 26px; padding-bottom: 3px; border-bottom: 1px solid #cfcec7; }
        .ymd { justify-content: flex-end; word-spacing: 12px; padding-right: 1px; }
        .vt { writing-mode: vertical-rl; text-orientation: upright; line-height: 13px; }
        .slash { background: #dedede; border-left: 1px solid #cfcec7; border-right: 1px solid #cfcec7; font-style: italic; }
        .tabs { height: 9px; flex: none; box-sizing: border-box; border-top: 1px solid #9a9a9a; display: flex; align-items: flex-start; overflow: hidden; background: #f0f0f0; }
        .nav { width: 14px; height: 9px; display: flex; justify-content: center; padding-top: 2px; box-sizing: border-box; border-right: 1px solid #bbb; }
        .tab { margin-left: 13px; display: flex; line-height: 16px; color: #111; }
        .tab span { padding: 0 11px 0 14px; background: #fff; }
      </style>
      <sheet-toolbar></sheet-toolbar>
      <div class="heads">
        <div class="corner"></div><div class="corner2"></div>
        <div class="cols">${COLS.split('').map(l => `<div class="ch">${l}</div>`).join('')}<div class="ch"></div></div>
      </div>
      <div class="area">
        <div class="rows">${ROW_H.map((_, i) => `<div class="rh">${i === 0 ? '·' : i + 1}</div>`).join('')}</div>
        <div class="gut"><div class="gut1"></div><div class="gut2"><i></i></div></div>
        <div class="grid">${cells}</div>
      </div>
      <div class="tabs">
        ${['M3 1v6M7 1 4 4l3 3', 'M6 1 3 4l3 3', 'M3 1l3 3-3 3', 'M2 1l3 3-3 3M6 1v6'].map(d => `<span class="nav"><svg width="9" height="8" viewBox="0 0 9 8"><path d="${d}" fill="none" stroke="#222"/></svg></span>`).join('')}
        <div class="tab">
          <svg width="6" height="9" viewBox="0 0 6 9" style="margin-right:-6px"><path d="M0 0l6 9" stroke="#555"/></svg>
          <span>第1页</span>
          <svg width="6" height="9" viewBox="0 0 6 9" style="margin-left:-6px"><path d="M6 0 0 9" stroke="#555"/></svg>
        </div>
      </div>`;
  }
}
customElements.define('sheet-view', SheetView);
</script>
</body>
</html>
